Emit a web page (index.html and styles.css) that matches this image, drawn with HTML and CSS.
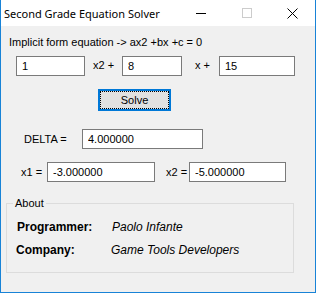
FILE: index.html
```html
<!DOCTYPE html>
<html lang="en">
<head>
    <meta charset="UTF-8">
    <title>Second Grade Equation Solver</title>
    <link rel="stylesheet" href="styles.css">
</head>
<body>
    <div class="window">
        <div class="titlebar">
            <span class="title">Second Grade Equation Solver</span>
            <div class="controls">
                <span class="ctl">
                    <svg width="10" height="10" viewBox="0 0 10 10"><path d="M0 5.5H10" stroke="#000" stroke-width="1"/></svg>
                </span>
                <span class="ctl">
                    <svg width="10" height="10" viewBox="0 0 10 10"><rect x="0.5" y="0.5" width="9" height="9" fill="none" stroke="#cccccc"/></svg>
                </span>
                <span class="ctl">
                    <svg width="11" height="11" viewBox="0 0 11 11"><path d="M0.5 0.5L10.5 10.5M10.5 0.5L0.5 10.5" stroke="#000" stroke-width="1"/></svg>
                </span>
            </div>
        </div>

        <div class="client">
            <p class="hint">Implicit form equation -&gt; ax2 +bx +c = 0</p>

            <div class="row coef">
                <input class="box box-a" type="text" value="1">
                <span class="op op-x2">x2 +</span>
                <input class="box box-b" type="text" value="8">
                <span class="op op-x">x +</span>
                <input class="box box-c" type="text" value="15">
            </div>

            <div class="row action">
                <button class="solve">Solve</button>
            </div>

            <div class="row delta">
                <span class="lbl lbl-delta">DELTA =</span>
                <input class="box box-delta" type="text" value="4.000000">
            </div>

            <div class="row roots">
                <span class="lbl lbl-x1">x1 =</span>
                <input class="box box-x1" type="text" value="-3.000000">
                <span class="lbl lbl-x2">x2 =</span>
                <input class="box box-x2" type="text" value="-5.000000">
            </div>

            <div class="about">
                <div class="about-title">About</div>
                <div class="info">
                    <span class="key">Programmer:</span>
                    <span class="val">Paolo Infante</span>
                    <span class="key key-company">Company:</span>
                    <span class="val val-company">Game Tools Developers</span>
                </div>
            </div>
        </div>
    </div>
</body>
</html>
```

FILE: styles.css
```css
body {
    margin: 0;
    padding: 0;
    font-family: "Liberation Sans", Arial, sans-serif;
    font-size: 11px;
    color: #000;
    background-color: #f0f0f0;
}

.window {
    width: 316px;
    height: 293px;
    box-sizing: border-box;
    border: 1px solid #1883d7;
    border-top: none;
    display: flex;
    flex-direction: column;
}

/* barra de titulo */
.titlebar {
    height: 26px;
    background-color: #fff;
    display: flex;
    align-items: center;
}

.title {
    flex: 1;
    padding-left: 3px;
    font-family: "Noto Sans", "Liberation Sans", sans-serif;
    font-size: 11px;
    color: #000;
}

.controls {
    display: flex;
    height: 100%;
}

.ctl {
    width: 46px;
    display: flex;
    align-items: center;
    justify-content: center;
}

.ctl:last-child {
    width: 45px;
}

/* area do formulario */
.client {
    flex: 1;
    background-color: #f0f0f0;
}

.hint {
    margin: 0;
    padding: 10px 0 0 8px;
    line-height: 13px;
}

.row {
    display: flex;
    align-items: center;
}

.box {
    height: 20px;
    box-sizing: border-box;
    border: 1px solid #7a7a7a;
    background-color: #fff;
    padding: 0 5px;
    margin: 0;
    font-family: "Liberation Sans", Arial, sans-serif;
    font-size: 11px;
    color: #000;
    outline: none;
}

.coef {
    margin-top: 7px;
    padding-left: 15px;
}

.box-a { width: 69px; }
.box-b { width: 60px; }
.box-c { width: 76px; }

.op {
    box-sizing: border-box;
    line-height: 13px;
    margin-top: -2px;
}

.op-x2 {
    width: 37px;
    padding-left: 8px;
}

.op-x {
    width: 37px;
    padding-left: 13px;
}

.action {
    margin-top: 13px;
    padding-left: 97px;
}

.solve {
    width: 73px;
    height: 22px;
    box-sizing: border-box;
    border: 2px solid #0078d7;
    background-color: #e1e1e1;
    outline: 1px dotted #000;
    outline-offset: -3px;
    font-family: "Liberation Sans", Arial, sans-serif;
    font-size: 11px;
    color: #000;
    padding: 0;
}

.delta {
    margin-top: 18px;
    padding-left: 23px;
}

.lbl {
    box-sizing: border-box;
    line-height: 13px;
}

.lbl-delta { width: 58px; }
.box-delta { width: 121px; }

.roots {
    margin-top: 13px;
    padding-left: 20px;
}

.lbl-x1 { width: 26px; }
.box-x1 { width: 108px; }

.lbl-x2 {
    width: 23px;
    margin-left: 11px;
}

.box-x2 { width: 97px; }

/* caixa Sobre */
.about {
    margin: 21px 0 0 5px;
    width: 288px;
    height: 70px;
    box-sizing: border-box;
    border: 1px solid #dcdcdc;
}

.about-title {
    width: fit-content;
    margin: -7px 0 0 6px;
    padding: 0 2px;
    line-height: 13px;
    background-color: #f0f0f0;
}

.info {
    display: grid;
    grid-template-columns: 95px auto;
    row-gap: 9px;
    margin: 10px 0 0 10px;
    font-size: 12px;
    line-height: 14px;
}

.key {
    font-weight: bold;
}

.key-company {
    margin-left: -1px;
}

.val {
    font-style: italic;
}

.val-company {
    margin-left: -1px;
}
```
